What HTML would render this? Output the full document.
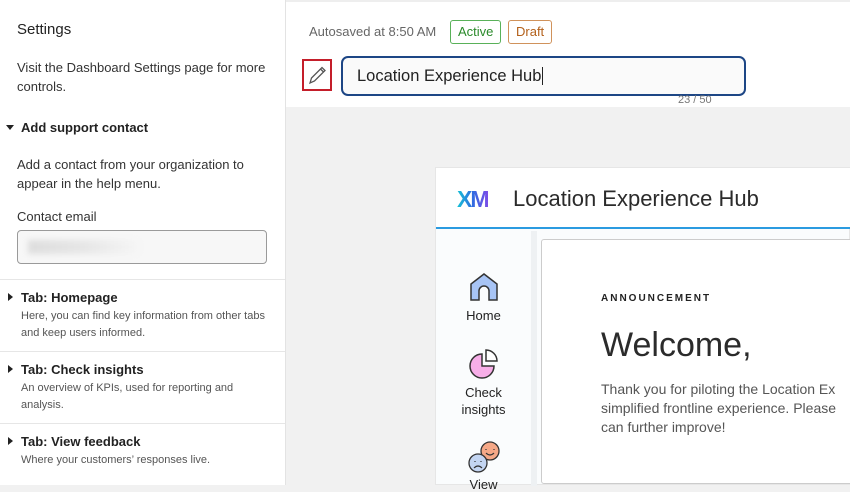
<!DOCTYPE html><html><head><style>
*{margin:0;padding:0;box-sizing:border-box}
body{width:850px;height:485px;overflow:hidden;font-family:"Liberation Sans",sans-serif;background:#f1f1f1;position:relative;color:#222}
.sb{position:absolute;left:0;top:0;width:286px;height:485px;background:#fff;border-right:1px solid #e3e3e3}
.a{position:absolute;left:17px;font-size:13px;color:#333;line-height:19px}
.sep{position:absolute;left:0;width:285px;border-top:1px solid #e6e6e6}
.tb{position:absolute;left:8px;font-size:13px;font-weight:bold;color:#222}
.td{position:absolute;left:21px;font-size:11px;color:#555;line-height:17px;width:250px}
.tri{display:inline-block;width:0;height:0;border-left:5px solid #222;border-top:4px solid transparent;border-bottom:4px solid transparent;margin-right:8px;vertical-align:1px}
.hd{position:absolute;left:286px;top:0;width:564px;height:107px;background:#fff;border-top:2px solid #eee}
.card{position:absolute;left:435px;top:167px;width:415px;height:318px;background:#fafcfd;border:1px solid #e6e6e6}
</style></head><body>
<div class="sb">
<div class="a" style="top:20px;font-size:15px;color:#222">Settings</div>
<div class="a" style="top:58px">Visit the Dashboard Settings page for more controls.</div>
<div class="a" style="top:118px;left:6px;font-weight:bold;color:#222"><span style="display:inline-block;border-top:5px solid #222;border-left:4px solid transparent;border-right:4px solid transparent;margin-right:7px;vertical-align:2px"></span>Add support contact</div>
<div class="a" style="top:155px;width:250px">Add a contact from your organization to appear in the help menu.</div>
<div class="a" style="top:207px">Contact email</div>
<div style="position:absolute;left:17px;top:230px;width:250px;height:34px;border:1px solid #9a9a9a;border-radius:4px;background:#f7f7f7"><div style="position:absolute;left:10px;top:9px;width:110px;height:14px;background:linear-gradient(90deg,#ddd,#e6e6e6,#f5f5f5);filter:blur(3px)"></div></div>
<div class="sep" style="top:279px"></div>
<div class="tb" style="top:290px"><span class="tri"></span>Tab: Homepage</div>
<div class="td" style="top:308px">Here, you can find key information from other tabs and keep users informed.</div>
<div class="sep" style="top:351px"></div>
<div class="tb" style="top:362px"><span class="tri"></span>Tab: Check insights</div>
<div class="td" style="top:380px;width:230px">An overview of KPIs, used for reporting and analysis.</div>
<div class="sep" style="top:423px"></div>
<div class="tb" style="top:434px"><span class="tri"></span>Tab: View feedback</div>
<div class="td" style="top:452px">Where your customers’ responses live.</div>
</div>
<div class="hd">
<div style="position:absolute;left:23px;top:22px;font-size:13px;color:#666">Autosaved at 8:50 AM</div>
<div style="position:absolute;left:164px;top:18px;padding:0 7px;height:24px;line-height:22px;font-size:13px;color:#2a8a2a;border:1px solid #59b159;border-radius:3px">Active</div>
<div style="position:absolute;left:222px;top:18px;padding:0 7px;height:24px;line-height:22px;font-size:13px;color:#b3601a;border:1px solid #d0925b;border-radius:3px">Draft</div>
<div style="position:absolute;left:16px;top:57px;width:30px;height:32px;border:2px solid #c41e2a"><svg width="26" height="28" viewBox="0 0 26 28"><path d="M6 22l1.5-5L18 6.5l3 3L10.5 20z M16.5 8l3 3" fill="none" stroke="#555" stroke-width="1.3"/></svg></div>
<div style="position:absolute;left:55px;top:54px;width:405px;height:40px;border:2px solid #1d4685;border-radius:7px;background:#fafafa;padding-left:14px;font-size:16.5px;line-height:36px;color:#222">Location Experience Hub<span style="border-left:1px solid #222;margin-left:1px"></span></div>
<div style="position:absolute;left:392px;top:92px;font-size:11px;color:#777">23 / 50</div>
</div>
<div class="card">
<div style="position:absolute;left:0;top:0;width:415px;height:61px;background:#fff;border-bottom:2px solid #2b9be0"></div>
<div style="position:absolute;left:21px;top:18px;font-size:23px;font-weight:bold;letter-spacing:-2px;background:linear-gradient(90deg,#14c3d6,#2f6be0,#7a4de8);-webkit-background-clip:text;color:transparent">XM</div>
<div style="position:absolute;left:77px;top:18px;font-size:22px;color:#2b2b2b">Location Experience Hub</div>
<div style="position:absolute;left:95px;top:63px;width:6px;height:255px;background:#eef1f3"></div>
<div style="position:absolute;left:105px;top:71px;width:315px;height:245px;background:#fff;border:1px solid #ccc;border-radius:3px"></div>
<div style="position:absolute;left:165px;top:125px;font-size:10px;font-weight:bold;letter-spacing:2px;color:#222">ANNOUNCEMENT</div>
<div style="position:absolute;left:165px;top:158px;font-size:34px;color:#2b2b2b">Welcome,</div>
<div style="position:absolute;left:165px;top:212px;font-size:14px;color:#555;line-height:19px;white-space:nowrap">Thank you for piloting the Location Ex<br>simplified frontline experience. Please<br>can further improve!</div>
<svg style="position:absolute;left:33px;top:104px" width="30" height="30"><path d="M2 28V12L15 2 28 12v16h-8v-9a5 5 0 0 0-10 0v9z" fill="#a7c4f5" stroke="#333" stroke-width="1.5"/></svg>
<div style="position:absolute;left:0;top:140px;width:95px;text-align:center;font-size:13px;color:#222">Home</div>
<svg style="position:absolute;left:32px;top:180px" width="32" height="32"><path d="M14 6a12 12 0 1 0 12 12H14z" fill="#f7aee8" stroke="#333" stroke-width="1.5"/><path d="M18 2a11 11 0 0 1 11 11H18z" fill="#fff" stroke="#333" stroke-width="1.5"/></svg>
<div style="position:absolute;left:0;top:216px;width:95px;text-align:center;font-size:13px;color:#222;line-height:17px">Check<br>insights</div>
<svg style="position:absolute;left:32px;top:273px" width="34" height="34"><circle cx="22" cy="10" r="9" fill="#f5a887" stroke="#333" stroke-width="1.3"/><path d="M18 8v1M26 8v1M18 12q4 4 8 0" stroke="#333" stroke-width="1.2" fill="none"/><circle cx="10" cy="22" r="9" fill="#c3d5f2" stroke="#333" stroke-width="1.3"/><path d="M7 20v1M13 20v1M6 27q4-4 8 0" stroke="#333" stroke-width="1.2" fill="none"/></svg>
<div style="position:absolute;left:0;top:309px;width:95px;text-align:center;font-size:13px;color:#222">View</div>
</div>
</body></html>
